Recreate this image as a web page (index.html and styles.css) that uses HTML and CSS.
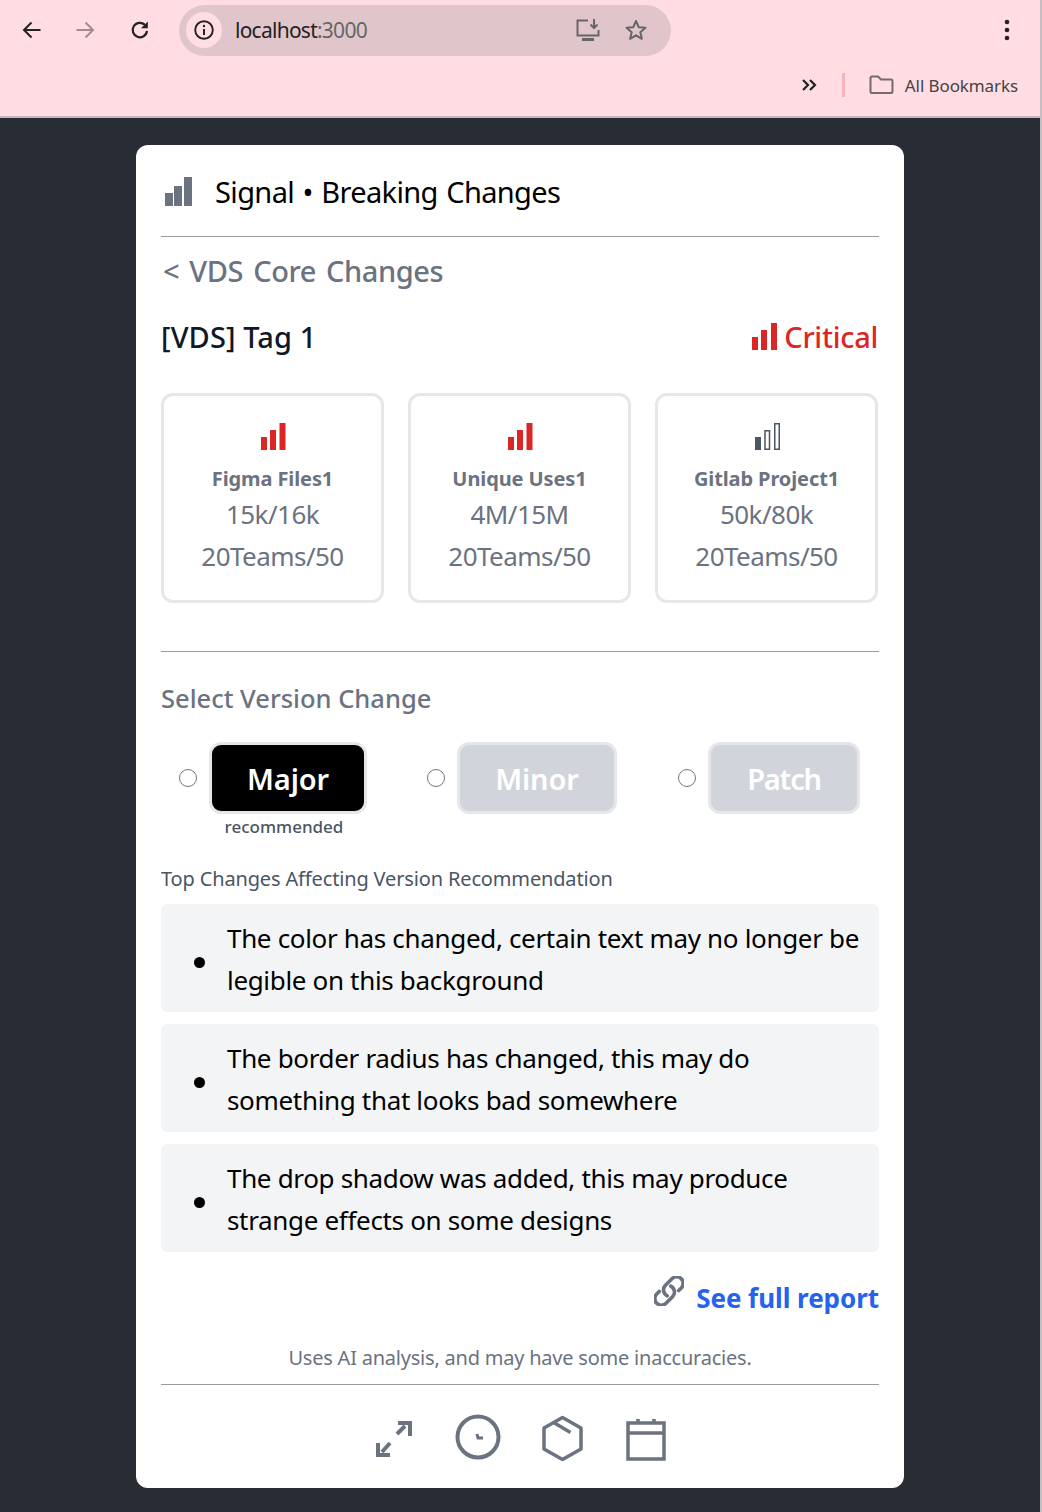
FILE: index.html
```html
<!DOCTYPE html>
<html lang="en">
<head>
<meta charset="utf-8">
<title>Signal</title>
<link rel="stylesheet" href="styles.css">
</head>
<body>
<div class="window">
  <header class="chrome">
    <div class="toolbar">
      <svg class="nav-back" width="24" height="24" viewBox="0 0 24 24"><path d="M20.5 12H5M11.5 4.5 4 12l7.5 7.5" fill="none" stroke="#222" stroke-width="2"/></svg>
      <svg class="nav-forward" width="24" height="24" viewBox="0 0 24 24"><path d="M3.5 12H19M12.5 4.5 20 12l-7.5 7.5" fill="none" stroke="#a38c90" stroke-width="2"/></svg>
      <svg class="nav-reload" width="24" height="24" viewBox="0 0 24 24"><path d="M19 13a7.2 7.2 0 1 1-2.2-6.2" fill="none" stroke="#222" stroke-width="2.2"/><path d="M19.8 3.5v6.8H13z" fill="#222"/></svg>
      <div class="omnibox">
        <span class="site-info"><svg width="22" height="22" viewBox="0 0 22 22"><circle cx="11" cy="11" r="8.8" fill="none" stroke="#222" stroke-width="1.9"/><path d="M11 10v6" stroke="#222" stroke-width="2"/><circle cx="11" cy="7" r="1.2" fill="#222"/></svg></span>
        <span class="url">localhost<span class="url-port">:3000</span></span>
        <svg class="omni-install" width="26" height="24" viewBox="0 0 26 24"><path d="M13 2.5H2.5v15h21V12" fill="none" stroke="#666" stroke-width="2"/><path d="M7 21.5h12" stroke="#666" stroke-width="3"/><path d="M19 1v8M15.5 6.5 19 10l3.500-3.500" fill="none" stroke="#666" stroke-width="2"/></svg>
        <svg class="omni-star" width="24" height="24" viewBox="0 0 24 24"><path d="m12 3 2.700 6.200 6.800.6-5.200 4.400 1.600 6.600L12 17.300 6.100 20.800l1.600-6.600L2.500 9.800l6.800-.6z" fill="none" stroke="#666" stroke-width="2" stroke-linejoin="round"/></svg>
      </div>
      <svg class="menu-dots" width="6" height="24" viewBox="0 0 6 24"><circle cx="3" cy="4" r="2.300" fill="#222"/><circle cx="3" cy="12" r="2.300" fill="#222"/><circle cx="3" cy="20" r="2.300" fill="#222"/></svg>
    </div>
    <div class="bookmarks">
      <svg class="more" width="16" height="14" viewBox="0 0 16 14"><path d="m2 2 5 5-5 5M9 2l5 5-5 5" fill="none" stroke="#222" stroke-width="2.200"/></svg>
      <span class="bm-sep"></span>
      <svg class="folder" width="25" height="20" viewBox="0 0 25 20"><path d="M1.500 3a1.500 1.500 0 0 1 1.500-1.500h6l3 3h10a1.500 1.500 0 0 1 1.500 1.500v10.500a1.500 1.500 0 0 1-1.500 1.500H3a1.500 1.500 0 0 1-1.500-1.500z" fill="none" stroke="#726a6c" stroke-width="2"/></svg>
      <span class="bm-label">All Bookmarks</span>
    </div>
  </header>

  <main class="stage">
    <article class="card">
      <div class="title-row">
        <svg width="27" height="29" viewBox="0 0 27 29"><path d="M0 16h8v13H0zM9 9h8v20H9zM19 0h8v29h-8z" fill="#6b7280"/></svg>
        <h1 class="title">Signal • Breaking Changes</h1>
      </div>
      <a class="back">&lt; VDS Core Changes</a>
      <div class="tag-row">
        <h2 class="tag">[VDS] Tag 1</h2>
        <div class="severity">
          <svg width="25" height="27" viewBox="0 0 25 27"><path d="M0 14h6v13H0zM9 7h6v20H9zM19 0h6v27h-6z" fill="#dc2626"/></svg>
          <span>Critical</span>
        </div>
      </div>
      <div class="stats">
        <section class="stat">
          <svg class="stat-icon" width="25" height="27" viewBox="0 0 25 27"><path d="M0 14h6v13H0zM9 7h6v20H9zM18.500 0h6v27h-6z" fill="#dc2626"/></svg>
          <h3 class="stat-name">Figma Files1</h3>
          <p class="stat-value">15k/16k</p>
          <p class="stat-value">20Teams/50</p>
        </section>
        <section class="stat">
          <svg class="stat-icon" width="25" height="27" viewBox="0 0 25 27"><path d="M0 14h6v13H0zM9 7h6v20H9zM18.500 0h6v27h-6z" fill="#dc2626"/></svg>
          <h3 class="stat-name">Unique Uses1</h3>
          <p class="stat-value">4M/15M</p>
          <p class="stat-value">20Teams/50</p>
        </section>
        <section class="stat">
          <svg class="stat-icon" width="25" height="27" viewBox="0 0 25 27"><path d="M0 14h6v13H0z" fill="#4b5563"/><path d="M10 7.750h4.500v18.500H10zM19.750.75h4.500v25.500h-4.500z" fill="none" stroke="#4b5563" stroke-width="1.500"/></svg>
          <h3 class="stat-name">Gitlab Project1</h3>
          <p class="stat-value">50k/80k</p>
          <p class="stat-value">20Teams/50</p>
        </section>
      </div>
      <h2 class="select-heading">Select Version Change</h2>
      <div class="versions">
        <label class="version">
          <input class="radio" type="radio" name="version">
          <span class="version-body"><span class="version-btn is-active">Major</span><span class="version-note">recommended</span></span>
        </label>
        <label class="version">
          <input class="radio" type="radio" name="version">
          <span class="version-body"><span class="version-btn">Minor</span></span>
        </label>
        <label class="version">
          <input class="radio" type="radio" name="version">
          <span class="version-body"><span class="version-btn is-patch">Patch</span></span>
        </label>
      </div>
      <h3 class="changes-heading">Top Changes Affecting Version Recommendation</h3>
      <ul class="changes">
        <li class="change">The color has changed, certain text may no longer be legible on this background</li>
        <li class="change">The border radius has changed, this may do something that looks bad somewhere</li>
        <li class="change">The drop shadow was added, this may produce strange effects on some designs</li>
      </ul>
      <div class="report-row">
        <svg class="link-icon" width="30" height="30" viewBox="1.700 1.700 20.600 20.600"><path d="M13.190 8.688a4.500 4.500 0 0 1 1.242 7.244l-4.500 4.500a4.500 4.500 0 0 1-6.364-6.364l1.757-1.757m13.350-.622 1.757-1.757a4.500 4.500 0 0 0-6.364-6.364l-4.500 4.500a4.500 4.500 0 0 0 1.242 7.244" fill="none" stroke="#6b7280" stroke-width="2.500" stroke-linecap="round" stroke-linejoin="round"/></svg>
        <a class="report">See full report</a>
      </div>
      <p class="disclaimer">Uses AI analysis, and may have some inaccuracies.</p>
      <nav class="footer-icons">
        <svg class="icon-expand" width="38" height="42" viewBox="0 0 38 42"><path d="M22 5h12v13M21 16l8-8M2 25v12h12M14 25l-8 9" fill="none" stroke="#6b7280" stroke-width="4"/></svg>
        <svg width="46" height="46" viewBox="0 0 46 46"><circle cx="23" cy="23" r="20.500" fill="none" stroke="#6b7280" stroke-width="4"/><path d="m22 20 1 4h5" fill="none" stroke="#6b7280" stroke-width="3"/></svg>
        <svg class="icon-hex" width="42" height="46" viewBox="0.500 0 42 46"><path d="M21 2.500 39.500 13v21L21 44.500 2.500 34V13z" fill="none" stroke="#6b7280" stroke-width="3.500" stroke-linejoin="round"/><path d="m13 8 16 9.500" stroke="#6b7280" stroke-width="3.500"/></svg>
        <svg class="icon-cal" width="42" height="42" viewBox="-1 0 42 42"><path d="M2 4h36v36H2zM2 14h36M12 0v5M28 0v5" fill="none" stroke="#6b7280" stroke-width="3.500"/></svg>
      </nav>
    </article>
  </main>
</div>
</body>
</html>
```

FILE: styles.css
```css
* { box-sizing: border-box; }

html, body { margin: 0; padding: 0; height: 100%; }

body {
  font-family: "Noto Sans", "Open Sans", "Liberation Sans", sans-serif;
  background: #c4bfc2;
  overflow: hidden;
}

.window {
  width: 1040px;
  height: 1512px;
  display: flex;
  flex-direction: column;
  background: #282c34;
}

.chrome {
  height: 118px;
  flex: none;
  background: #ffdde2;
  border-bottom: 2px solid #c9b5b9;
  display: flex;
  flex-direction: column;
}

.toolbar {
  height: 60px;
  display: flex;
  align-items: center;
  padding: 0 0 0 20px;
}

.nav-forward { margin-left: 29px; }
.nav-reload { margin-left: 31px; }

.omnibox {
  margin-left: 27px;
  width: 492px;
  height: 51px;
  border-radius: 26px;
  background: #e0c6cb;
  display: flex;
  align-items: center;
  padding: 0 23px 0 7px;
}

.site-info {
  width: 36px;
  height: 36px;
  border-radius: 50%;
  background: #ffdde2;
  display: flex;
  align-items: center;
  justify-content: center;
}

.url {
  margin-left: 13px;
  font-size: 21px;
  letter-spacing: -.75px;
  color: #222;
  flex: 1;
}

.url-port { color: #666; }

.omni-install { margin-right: 1px; }
.omni-star { margin-left: 22px; }

.menu-dots { margin-left: 333px; }

.bookmarks {
  height: 56px;
  display: flex;
  align-items: center;
  justify-content: flex-end;
  padding: 0 22px 6px 0;
}

.bm-sep {
  width: 3px;
  height: 24px;
  margin: 0 24px 0 25px;
  background: #f7b2be;
}

.bm-label {
  margin-left: 11px;
  font-size: 17px;
  letter-spacing: -.1px;
  color: #444;
}

.stage {
  flex: 1;
  padding: 27px 0 0 136px;
}

.card {
  width: 768px;
  height: 1343px;
  background: #fff;
  border-radius: 12px;
  padding: 0 25px;
  color: #000;
}

.title-row {
  height: 92px;
  display: flex;
  align-items: center;
  gap: 23px;
  padding: 2px 0 0 4px;
  border-bottom: 1px solid #9a9a9a;
}

.title {
  margin: 0;
  font-size: 29px;
  font-weight: 400;
  letter-spacing: -.63px;
  word-spacing: 1.500px;
}

.back {
  display: block;
  margin-top: 14px;
  padding-left: 2px;
  font-size: 29px;
  line-height: 40px;
  font-weight: 500;
  word-spacing: 3px;
  letter-spacing: -.42px;
  color: #6b7280;
}

.tag-row {
  margin-top: 25px;
  height: 40px;
  display: flex;
  align-items: center;
  justify-content: space-between;
}

.tag {
  margin: 0;
  font-size: 29px;
  font-weight: 500;
  letter-spacing: .1px;
  color: #111827;
}

.severity {
  display: flex;
  align-items: center;
  gap: 7px;
  font-size: 29px;
  font-weight: 500;
  letter-spacing: -.3px;
  color: #dc2626;
  padding-right: 1px;
}

.stats {
  margin-top: 37px;
  height: 259px;
  display: grid;
  grid-template-columns: repeat(3, 223px);
  gap: 24px;
  border-bottom: 1px solid #9a9a9a;
  padding-bottom: 48px;
}

.stat {
  height: 210px;
  border: 3px solid #e5e7eb;
  border-radius: 12px;
  display: flex;
  flex-direction: column;
  align-items: center;
  padding-top: 27px;
  color: #6b7280;
}

.stat-icon { margin-left: 1px; }

.stat-name {
  margin: 14px 0 0;
  font-size: 20px;
  line-height: 29px;
  font-weight: 700;
  letter-spacing: -.1px;
}

.stat-value {
  margin: 0;
  font-size: 26px;
  line-height: 42px;
  letter-spacing: -.55px;
}

.select-heading {
  margin: 26px 0 0;
  font-size: 25.500px;
  line-height: 40px;
  font-weight: 500;
  color: #6b7280;
}

.versions {
  margin-top: 24px;
  height: 122px;
  display: flex;
  gap: 61px;
  padding-left: 18px;
}

.version {
  display: flex;
  align-items: flex-start;
  gap: 12px;
}

.radio {
  width: 18px;
  height: 18px;
  margin: 27px 0 0;
  flex: none;
  appearance: none;
  border: 1.500px solid #767676;
  border-radius: 50%;
  background: #fff;
}

.version-body {
  display: flex;
  flex-direction: column;
  align-items: center;
}

.version-btn {
  width: 160px;
  height: 72px;
  display: flex;
  align-items: center;
  justify-content: center;
  border: 3px solid #e5e7eb;
  border-radius: 12px;
  background: #d1d5db;
  color: #fff;
  font-size: 29px;
  font-weight: 600;
  letter-spacing: -.1px;
}

.version-btn.is-active {
  width: 158px;
  margin-right: -1px;
  background: #000;
}

.version-btn.is-patch {
  width: 152px;
  letter-spacing: -1.200px;
}

.version-note {
  margin-top: 0;
  padding-right: 7px;
  font-size: 17px;
  line-height: 26px;
  font-weight: 500;
  color: #4b5563;
}

.changes-heading {
  margin: 0;
  font-size: 20px;
  line-height: 30px;
  font-weight: 400;
  color: #4b5563;
  letter-spacing: -.15px;
}

.changes {
  list-style: none;
  margin: 10px 0 0;
  padding: 0;
  display: flex;
  flex-direction: column;
  gap: 12px;
}

.change {
  position: relative;
  height: 108px;
  padding: 13px 10px 12px 66px;
  border-radius: 6px;
  background: #f3f4f6;
  font-size: 26px;
  line-height: 42px;
  letter-spacing: -.33px;
}

.change::before {
  content: "";
  position: absolute;
  left: 33px;
  top: 53px;
  width: 11px;
  height: 11px;
  border-radius: 50%;
  background: #000;
}

.report-row {
  margin-top: 22px;
  height: 46px;
  display: flex;
  align-items: flex-start;
  justify-content: flex-end;
  gap: 12px;
}

.link-icon { margin-top: 2px; }

.report {
  margin-top: 6px;
  font-size: 26px;
  line-height: 36px;
  font-weight: 700;
  color: #2563eb;
  letter-spacing: -.05px;
}

.disclaimer {
  margin: 23px 0 0;
  padding-bottom: 10px;
  height: 42px;
  border-bottom: 1px solid #9a9a9a;
  text-align: center;
  font-size: 20px;
  line-height: 30px;
  color: #6b7280;
  letter-spacing: -.22px;
}

.footer-icons {
  margin-top: 27px;
  display: flex;
  align-items: center;
  justify-content: center;
  gap: 41px;
  padding-left: 3px;
}

.icon-expand { margin-top: 4px; }
.icon-hex { margin-top: 3px; }
.icon-cal { margin-top: 6px; }
```
